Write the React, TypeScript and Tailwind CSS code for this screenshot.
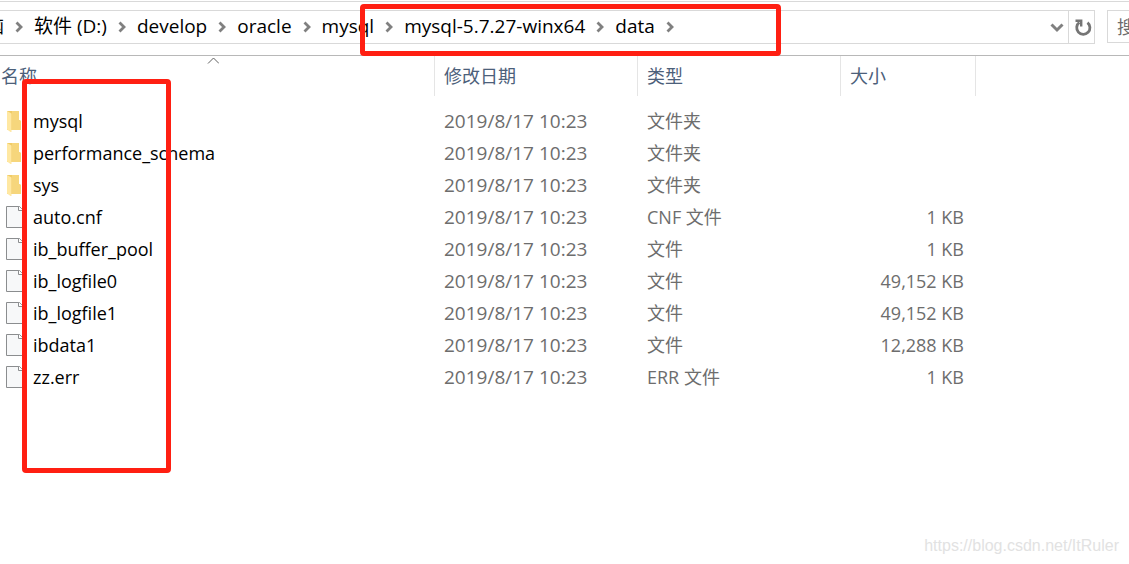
import React, { useState } from 'react';
import clsx from 'clsx';

type FileKind = 'folder' | 'file';

interface Entry {
    name: string;
    kind: FileKind;
    modified: string;
    type: string;
    size: string;
}

const breadcrumbs = ['此电脑', '软件 (D:)', 'develop', 'oracle', 'mysql', 'mysql-5.7.27-winx64', 'data'];

const entries: Entry[] = [
    { name: 'mysql', kind: 'folder', modified: '2019/8/17 10:23', type: '文件夹', size: '' },
    { name: 'performance_schema', kind: 'folder', modified: '2019/8/17 10:23', type: '文件夹', size: '' },
    { name: 'sys', kind: 'folder', modified: '2019/8/17 10:23', type: '文件夹', size: '' },
    { name: 'auto.cnf', kind: 'file', modified: '2019/8/17 10:23', type: 'CNF 文件', size: '1 KB' },
    { name: 'ib_buffer_pool', kind: 'file', modified: '2019/8/17 10:23', type: '文件', size: '1 KB' },
    { name: 'ib_logfile0', kind: 'file', modified: '2019/8/17 10:23', type: '文件', size: '49,152 KB' },
    { name: 'ib_logfile1', kind: 'file', modified: '2019/8/17 10:23', type: '文件', size: '49,152 KB' },
    { name: 'ibdata1', kind: 'file', modified: '2019/8/17 10:23', type: '文件', size: '12,288 KB' },
    { name: 'zz.err', kind: 'file', modified: '2019/8/17 10:23', type: 'ERR 文件', size: '1 KB' },
];

function Separator() {
    return (
        <svg className="w-2 h-3 shrink-0" viewBox="0 0 8 12" fill="none" aria-hidden="true">
            <path d="M1.5 1.5L6 6L1.5 10.5" stroke="#808080" strokeWidth="2.8" />
        </svg>
    );
}

function EntryIcon({ kind }: { kind: FileKind }) {
    if (kind === 'folder') {
        return (
            <svg className="w-5 h-6 shrink-0" viewBox="0 0 20 24" aria-hidden="true">
                <path d="M1 2H13V11L15 12V21H1Z" fill="#f0cb66" />
                <path d="M6 2H13V11L15 12V21H6Z" fill="#f6d67c" />
                <path d="M1 2L5.5 4.5V23H4.5L1 20.5Z" fill="#ffe8a2" />
            </svg>
        );
    }
    return (
        <svg className="w-5 h-6 shrink-0" viewBox="0 0 20 24" aria-hidden="true">
            <path d="M0.5 1.5H13.5L18.5 6.5V22.5H0.5Z" fill="#f7f8f9" stroke="#8b8d8f" />
            <path d="M12.5 1.5V5.5H17.5" fill="#ffffff" stroke="#8b8d8f" />
        </svg>
    );
}

function AddressBar() {
    return (
        <div className="flex gap-3 pt-2 pb-[11px] border-t border-[#d9d9d9] mt-px">
            <div className="flex flex-1 min-w-0 h-[34px] border border-l-0 border-[#d9d9d9]">
                <nav aria-label="路径" className="flex-1 min-w-0 overflow-hidden">
                    <ol className="flex items-center h-full -ml-[53px] text-[19px]">
                        {breadcrumbs.map((crumb) => (
                            <li key={crumb} className="flex items-center gap-[11px] pr-[11px]">
                                <button className="pb-0.5 whitespace-nowrap">{crumb}</button>
                                <Separator />
                            </li>
                        ))}
                    </ol>
                </nav>
                <button aria-label="以前的位置" className="w-[22px] flex items-center justify-center">
                    <svg className="w-4 h-3" viewBox="0 0 16 12" fill="none">
                        <path d="M2.5 3.5L8 9L13.5 3.5" stroke="#808080" strokeWidth="3" />
                    </svg>
                </button>
                <button aria-label="刷新" className="w-[26px] border-l border-[#d9d9d9] flex items-center justify-center">
                    <svg className="w-5 h-5" viewBox="-1 0 20 20" fill="none">
                        <path d="M14.5 5.6A6.6 6.6 0 1 1 6.4 5.4" stroke="#757575" strokeWidth="2.8" />
                        <path d="M2.5 3.8H8.2V9.5" stroke="#757575" strokeWidth="2.4" />
                    </svg>
                </button>
            </div>
            <div className="w-[22px] h-[33px] shrink-0 overflow-hidden border border-r-0 border-[#d9d9d9]">
                <input
                    type="text"
                    aria-label="搜索"
                    placeholder="搜索"
                    className="w-40 h-full pl-[9px] outline-none placeholder:text-[#6d6d6d]"
                />
            </div>
        </div>
    );
}

function FileTable() {
    const [ascending, setAscending] = useState(true);
    const rows = ascending ? entries : [...entries].reverse();

    return (
        <table className="w-full table-fixed border-collapse text-left text-[#6d6d6d]">
            <colgroup>
                <col className="w-[435px]" />
                <col className="w-[203px]" />
                <col className="w-[203px]" />
                <col className="w-[135px]" />
                <col />
            </colgroup>
            <thead className="text-[#4c607a]">
                <tr className="h-10">
                    <th className="relative p-0 font-normal shadow-[inset_-1px_0_0_#e5e5e5]">
                        <button className="pl-px" onClick={() => setAscending(!ascending)}>
                            名称
                        </button>
                        <svg
                            className={clsx('absolute top-px left-[207px] w-3 h-2', !ascending && 'rotate-180')}
                            viewBox="0 0 12 8"
                            fill="none"
                            aria-hidden="true"
                        >
                            <path d="M1 6.5L6.5 1L12 6.5" stroke="#606060" />
                        </svg>
                    </th>
                    <th className="p-0 pl-[9px] font-normal shadow-[inset_-1px_0_0_#e5e5e5]">修改日期</th>
                    <th className="p-0 pl-[9px] font-normal shadow-[inset_-1px_0_0_#e5e5e5]">类型</th>
                    <th className="p-0 pl-[9px] font-normal shadow-[inset_-1px_0_0_#e5e5e5]">大小</th>
                    <td />
                </tr>
            </thead>
            <tbody>
                <tr className="h-[9px]" aria-hidden="true">
                    <td colSpan={5} className="p-0" />
                </tr>
                {rows.map((entry) => (
                    <tr key={entry.name} className="h-8">
                        <td className="p-0">
                            <div className="flex items-center gap-[7px] pl-1.5 text-black">
                                <EntryIcon kind={entry.kind} />
                                <span className="whitespace-nowrap">{entry.name}</span>
                            </div>
                        </td>
                        <td className="p-0 pl-[9px] text-[19px]">{entry.modified}</td>
                        <td className="p-0 pl-[9px]">{entry.type}</td>
                        <td className="p-0 pr-3 text-right">{entry.size}</td>
                        <td />
                    </tr>
                ))}
            </tbody>
        </table>
    );
}

export default function App() {
    return (
        <div className="relative min-h-screen overflow-hidden bg-white text-black text-[18px] leading-6 font-['Open_Sans','Noto_Sans_CJK_SC',sans-serif]">
            <AddressBar />
            <main className="border-t border-[#b8b8b8]">
                <FileTable />
            </main>

            {/* Highlights over the path and the name column */}
            <div className="absolute left-[360px] top-1 w-[421px] h-[52px] border-5 border-[#ff1f12] rounded pointer-events-none" />
            <div className="absolute left-[22px] top-[79px] w-[149px] h-[394px] border-5 border-[#ff1f12] rounded pointer-events-none" />

            <p className="absolute right-2.5 bottom-1.5 text-[16px] text-[#e2e2e2] font-['Liberation_Sans',sans-serif]">
                https://blog.csdn.net/ItRuler
            </p>
        </div>
    );
}
